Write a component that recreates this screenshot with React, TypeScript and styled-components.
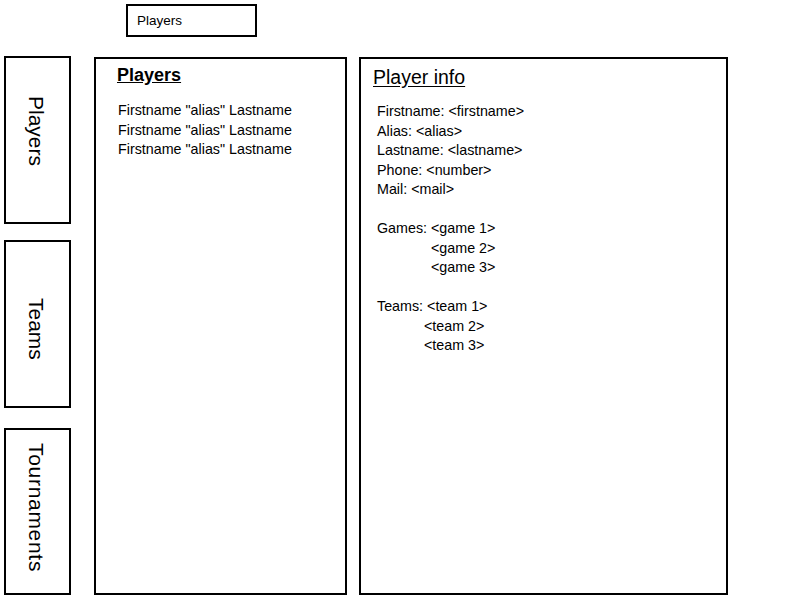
import React from "react";
import styled, { createGlobalStyle } from "styled-components";

const Global = createGlobalStyle`
  html, body { margin: 0; padding: 0; background: #fff; }
  body { font-family: "Liberation Sans", Arial, sans-serif; color: #000; }
`;

const Page = styled.div`
  width: 800px;
  height: 600px;
  display: flex;
  flex-direction: column;
  padding: 4px 0 0 4px;
  box-sizing: border-box;
`;

const TopTab = styled.div`
  margin-left: 122px;
  width: 131px;
  height: 33px;
  box-sizing: border-box;
  border: 2px solid #000;
  display: flex;
  align-items: center;
  padding-left: 9px;
  font-size: 13.5px;
`;

const Body = styled.div`
  display: flex;
  margin-top: 19px;
`;

const Nav = styled.div`
  display: flex;
  flex-direction: column;
  width: 67px;
`;

const NavBox = styled.div<{ $top: number; $height: number }>`
  margin-top: ${(p) => p.$top}px;
  height: ${(p) => p.$height}px;
  box-sizing: border-box;
  border: 2px solid #000;
  display: flex;
  align-items: center;
  justify-content: center;
`;

const NavLabel = styled.span<{ $shift: number; $spacing?: number }>`
  writing-mode: vertical-rl;
  font-size: 21px;
  margin-left: -3px;
  letter-spacing: ${(p) => p.$spacing ?? 0}px;
  transform: translateY(${(p) => p.$shift}px);
`;

const Panel = styled.div<{ $width: number; $left: number }>`
  margin-top: 1px;
  margin-left: ${(p) => p.$left}px;
  width: ${(p) => p.$width}px;
  height: 538px;
  box-sizing: border-box;
  border: 2px solid #000;
  display: flex;
  flex-direction: column;
`;

const ListTitle = styled.h2`
  margin: 5px 0 0 21px;
  font-size: 18px;
  font-weight: bold;
  text-decoration: underline;
  line-height: 22px;
`;

const InfoTitle = styled.h2`
  margin: 6px 0 0 12px;
  font-size: 19.5px;
  font-weight: normal;
  text-decoration: underline;
  text-underline-offset: 2px;
  line-height: 24px;
`;

const Lines = styled.div<{ $left: number; $top: number }>`
  margin: ${(p) => p.$top}px 0 0 ${(p) => p.$left}px;
  font-size: 14.3px;
  line-height: 19.5px;
  white-space: pre;
`;

const Line = styled.div<{ $indent?: number }>`
  padding-left: ${(p) => p.$indent ?? 0}px;
  height: 19.5px;
`;

export default function App() {
  return (
    <>
      <Global />
      <Page>
        <TopTab>Players</TopTab>
        <Body>
          <Nav>
            <NavBox $top={0} $height={168}>
              <NavLabel $shift={-9}>Players</NavLabel>
            </NavBox>
            <NavBox $top={16} $height={168}>
              <NavLabel $shift={5}>Teams</NavLabel>
            </NavBox>
            <NavBox $top={20} $height={167}>
              <NavLabel $shift={-4} $spacing={0.7}>Tournaments</NavLabel>
            </NavBox>
          </Nav>
          <Panel $left={23} $width={253}>
            <ListTitle>Players</ListTitle>
            <Lines $left={22} $top={15}>
              <Line>Firstname "alias" Lastname</Line>
              <Line>Firstname "alias" Lastname</Line>
              <Line>Firstname "alias" Lastname</Line>
            </Lines>
          </Panel>
          <Panel $left={12} $width={369}>
            <InfoTitle>Player info</InfoTitle>
            <Lines $left={16} $top={13}>
              <Line>Firstname: &lt;firstname&gt;</Line>
              <Line>Alias: &lt;alias&gt;</Line>
              <Line>Lastname: &lt;lastname&gt;</Line>
              <Line>Phone: &lt;number&gt;</Line>
              <Line>Mail: &lt;mail&gt;</Line>
              <Line />
              <Line>Games: &lt;game 1&gt;</Line>
              <Line $indent={54}>&lt;game 2&gt;</Line>
              <Line $indent={54}>&lt;game 3&gt;</Line>
              <Line />
              <Line>Teams: &lt;team 1&gt;</Line>
              <Line $indent={47}>&lt;team 2&gt;</Line>
              <Line $indent={47}>&lt;team 3&gt;</Line>
            </Lines>
          </Panel>
        </Body>
      </Page>
    </>
  );
}
